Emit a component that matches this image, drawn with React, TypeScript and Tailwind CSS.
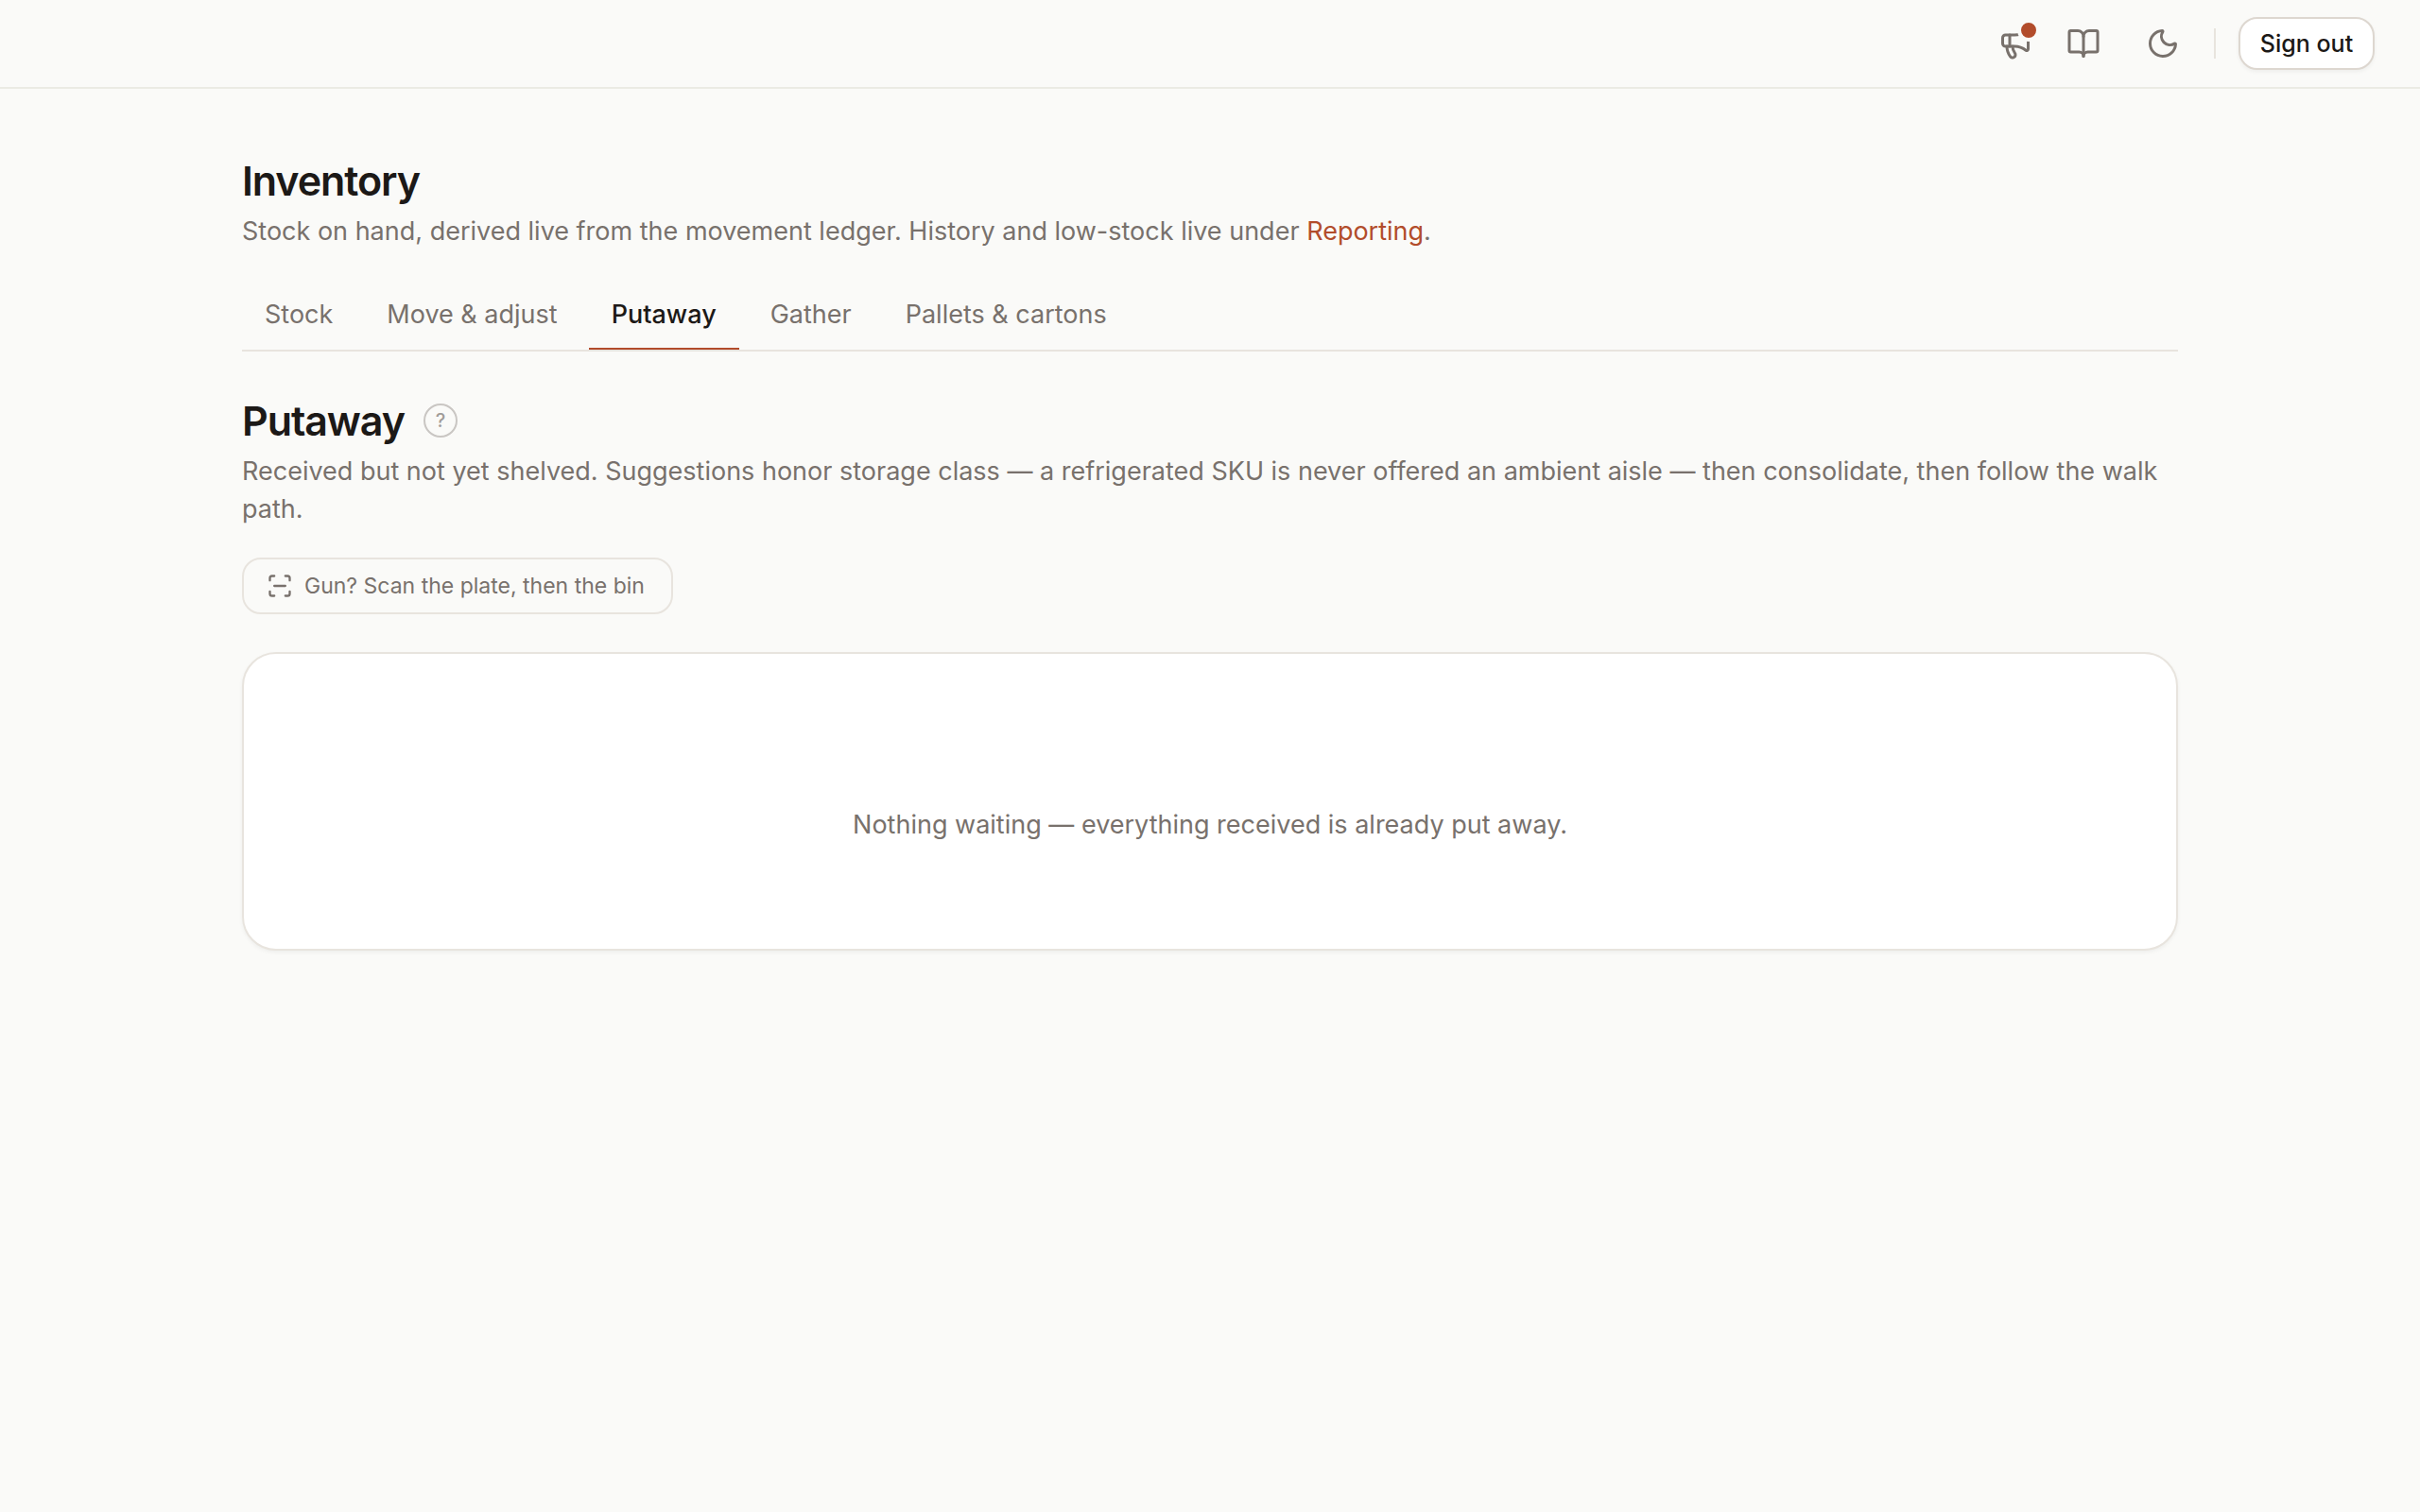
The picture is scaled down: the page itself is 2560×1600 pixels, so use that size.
import { BookOpen, Megaphone, Moon, ScanLine } from "lucide-react";

const tabs = ["Stock", "Move & adjust", "Putaway", "Gather", "Pallets & cartons"];

function Header() {
  return (
    <header className="flex h-[94px] items-center justify-end gap-6 border-b-2 border-[#ebebe4] px-12">
      <div className="flex items-center gap-3 text-[#78716c]">
        <button type="button" aria-label="What's new" className="relative flex size-[60px] items-center justify-center">
          <Megaphone size={36} />
          <span className="absolute right-1 top-1 size-6 rounded-full border-4 border-[#fafaf8] bg-[#b24c2b]"></span>
        </button>
        <a href="#docs" aria-label="Documentation" className="flex size-[60px] items-center justify-center">
          <BookOpen size={36} />
        </a>
      </div>
      <button type="button" aria-label="Toggle theme" className="flex size-[60px] items-center justify-center text-[#78716c]">
        <Moon size={36} />
      </button>
      <div className="h-8 w-0.5 bg-[#e8e4de]"></div>
      <button type="button" className="h-14 w-36 rounded-[20px] border-2 border-[#ddd7d0] bg-white text-[25px] font-medium leading-8 text-[#1c1917] shadow-[0_2px_4px_rgba(28,25,23,0.05)]">
        Sign out
      </button>
    </header>
  );
}

export default function App() {
  return (
    <div className="min-h-screen bg-[#fafaf8] font-['Inter',sans-serif] text-[27px] leading-10 text-[#78716c]">
      <Header />
      <main className="mx-auto max-w-[2048px] pt-[65px]">
        <h1 className="text-[43px] font-semibold leading-[64px] tracking-tight text-[#1c1917]">Inventory</h1>
        <p className="mt-0.5">
          Stock on hand, derived live from the movement ledger. History and low-stock live under{" "}
          <a href="#reporting" className="text-[#b24c2b]">Reporting</a>.
        </p>

        <nav className="mt-8 flex gap-[9px] border-b-2 border-[#e8e4de]">
          {tabs.map((tab) => (
            <a
              key={tab}
              href="#"
              className={
                tab === "Putaway"
                  ? "border-b-2 border-[#b24c2b] px-6 pb-[15px] pt-4 font-medium text-[#1c1917]"
                  : "border-b-2 border-transparent px-6 pb-[15px] pt-4"
              }
            >
              {tab}
            </a>
          ))}
        </nav>

        <div className="mt-[41px] flex items-center gap-5">
          <h2 className="text-[43px] font-semibold leading-[64px] tracking-tight text-[#1c1917]">Putaway</h2>
          <button
            type="button"
            aria-label="About putaway"
            className="flex size-9 items-center justify-center rounded-full border-2 border-[#c9c6c3] text-xl font-medium text-[#a19c98]"
          >
            ?
          </button>
        </div>
        <p className="mt-0.5">
          Received but not yet shelved. Suggestions honor storage class — a refrigerated SKU is never offered an ambient
          aisle — then consolidate, then follow the walk path.
        </p>

        <button
          type="button"
          className="mt-[31px] flex items-center gap-3 rounded-[20px] border-2 border-[#e8e4de] py-3 pl-6 pr-7 text-[23px] leading-8"
        >
          <ScanLine size={28} />
          Gun? Scan the plate, then the bin
        </button>

        <section className="mt-10 rounded-[36px] border-2 border-[#e8e4de] bg-white pb-[111px] pt-[161px] text-center shadow-[0_2px_4px_rgba(28,25,23,0.05)]">
          <p>Nothing waiting — everything received is already put away.</p>
        </section>
      </main>
    </div>
  );
}
